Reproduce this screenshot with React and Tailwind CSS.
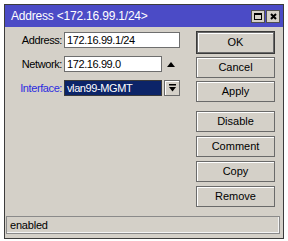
import React from 'react'

const font = { fontFamily: '"Liberation Sans", Arial, sans-serif' }

function Btn({ children, primary, className = '' }) {
  return (
    <div
      className={`flex items-center justify-center w-[79px] bg-[#d4d0c8] text-[11px] text-black border ${
        primary ? 'border-[#3a3a3a] shadow-[inset_0_0_0_1px_#6a6a6a,inset_2px_2px_0_#fff]' : 'border-[#6a6a6a] shadow-[inset_1px_1px_0_#fff]'
      } ${className}`}
    >
      {children}
    </div>
  )
}

export default function App() {
  return (
    <div className="w-[288px] h-[241px] bg-white pl-[4px] pt-[4px]" style={font}>
      <div className="w-[280px] h-[235px] border border-[#3c3c3c] bg-[#d4d0c8] flex flex-col">
        {/* Title bar */}
        <div className="h-[22px] bg-[#4b4bc6] flex items-center pl-[6px] pr-[3px]">
          <span className="flex-1 text-white text-[12px] leading-none tracking-[-0.2px]">Address &lt;172.16.99.1/24&gt;</span>
          <div className="flex gap-[1px]">
            <div className="w-[14px] h-[13px] bg-[#d4d0c8] border border-[#505050] flex items-center justify-center">
              <div className="w-[8px] h-[7px] border border-black border-t-2"></div>
            </div>
            <div className="w-[14px] h-[13px] bg-[#d4d0c8] border border-[#505050] flex items-center justify-center">
              <svg width="7" height="7" viewBox="0 0 7 7">
                <path d="M1 1 L6 6 M6 1 L1 6" stroke="#000" strokeWidth="2" />
              </svg>
            </div>
          </div>
        </div>

        {/* Body */}
        <div className="flex-1 flex">
          <div className="w-[187px] pt-[5px] flex flex-col gap-[8px] text-[11px] tracking-[-0.4px]">
            <div className="flex items-center h-[16px]">
              <span className="w-[59px] text-right pr-[2px] text-black">Address:</span>
              <div className="w-[116px] h-[16px] bg-white border border-[#6e6e6e] leading-[14px] pl-[2px] text-black">172.16.99.1/24</div>
            </div>
            <div className="flex items-center h-[16px]">
              <span className="w-[59px] text-right pr-[2px] text-black">Network:</span>
              <div className="w-[98px] h-[16px] bg-white border border-[#6e6e6e] leading-[14px] pl-[2px] text-black">172.16.99.0</div>
              <div className="w-[18px] flex justify-center">
                <svg width="8" height="5" viewBox="0 0 8 5">
                  <path d="M0 5 L4 0 L8 5 Z" fill="#000" />
                </svg>
              </div>
            </div>
            <div className="flex items-center h-[16px]">
              <span className="w-[59px] text-right pr-[2px] text-[#2b2be0]">Interface:</span>
              <div className="w-[98px] h-[16px] bg-[#0c2468] border border-[#3a3a3a] leading-[14px] pl-[2px] text-white">vlan99-MGMT</div>
              <div className="ml-[2px] w-[16px] h-[16px] border border-[#6a6a6a] shadow-[inset_1px_1px_0_#fff] flex items-center justify-center">
                <svg width="7" height="8" viewBox="0 0 7 8">
                  <rect x="0" y="0" width="7" height="1.5" fill="#000" />
                  <path d="M0 3 L7 3 L3.5 7.5 Z" fill="#000" />
                </svg>
              </div>
            </div>
          </div>

          <div className="ml-[4px] pt-[4px] flex flex-col">
            <div className="flex flex-col gap-[3px]">
              <Btn primary className="h-[23px]">OK</Btn>
              <Btn className="h-[21px]">Cancel</Btn>
              <Btn className="h-[21px]">Apply</Btn>
            </div>
            <div className="mt-[9px] flex flex-col gap-[4px]">
              <Btn className="h-[21px]">Disable</Btn>
              <Btn className="h-[21px]">Comment</Btn>
              <Btn className="h-[21px]">Copy</Btn>
              <Btn className="h-[21px]">Remove</Btn>
            </div>
          </div>
        </div>

        {/* Status bar */}
        <div className="mx-[1px] mr-[3px] mb-[4px] h-[18px] border border-[#8a8a8a] shadow-[inset_-1px_-1px_0_#f4f4f4] flex items-center pl-[3px] text-[11px] tracking-[-0.2px] text-black">
          enabled
        </div>
      </div>
    </div>
  )
}
